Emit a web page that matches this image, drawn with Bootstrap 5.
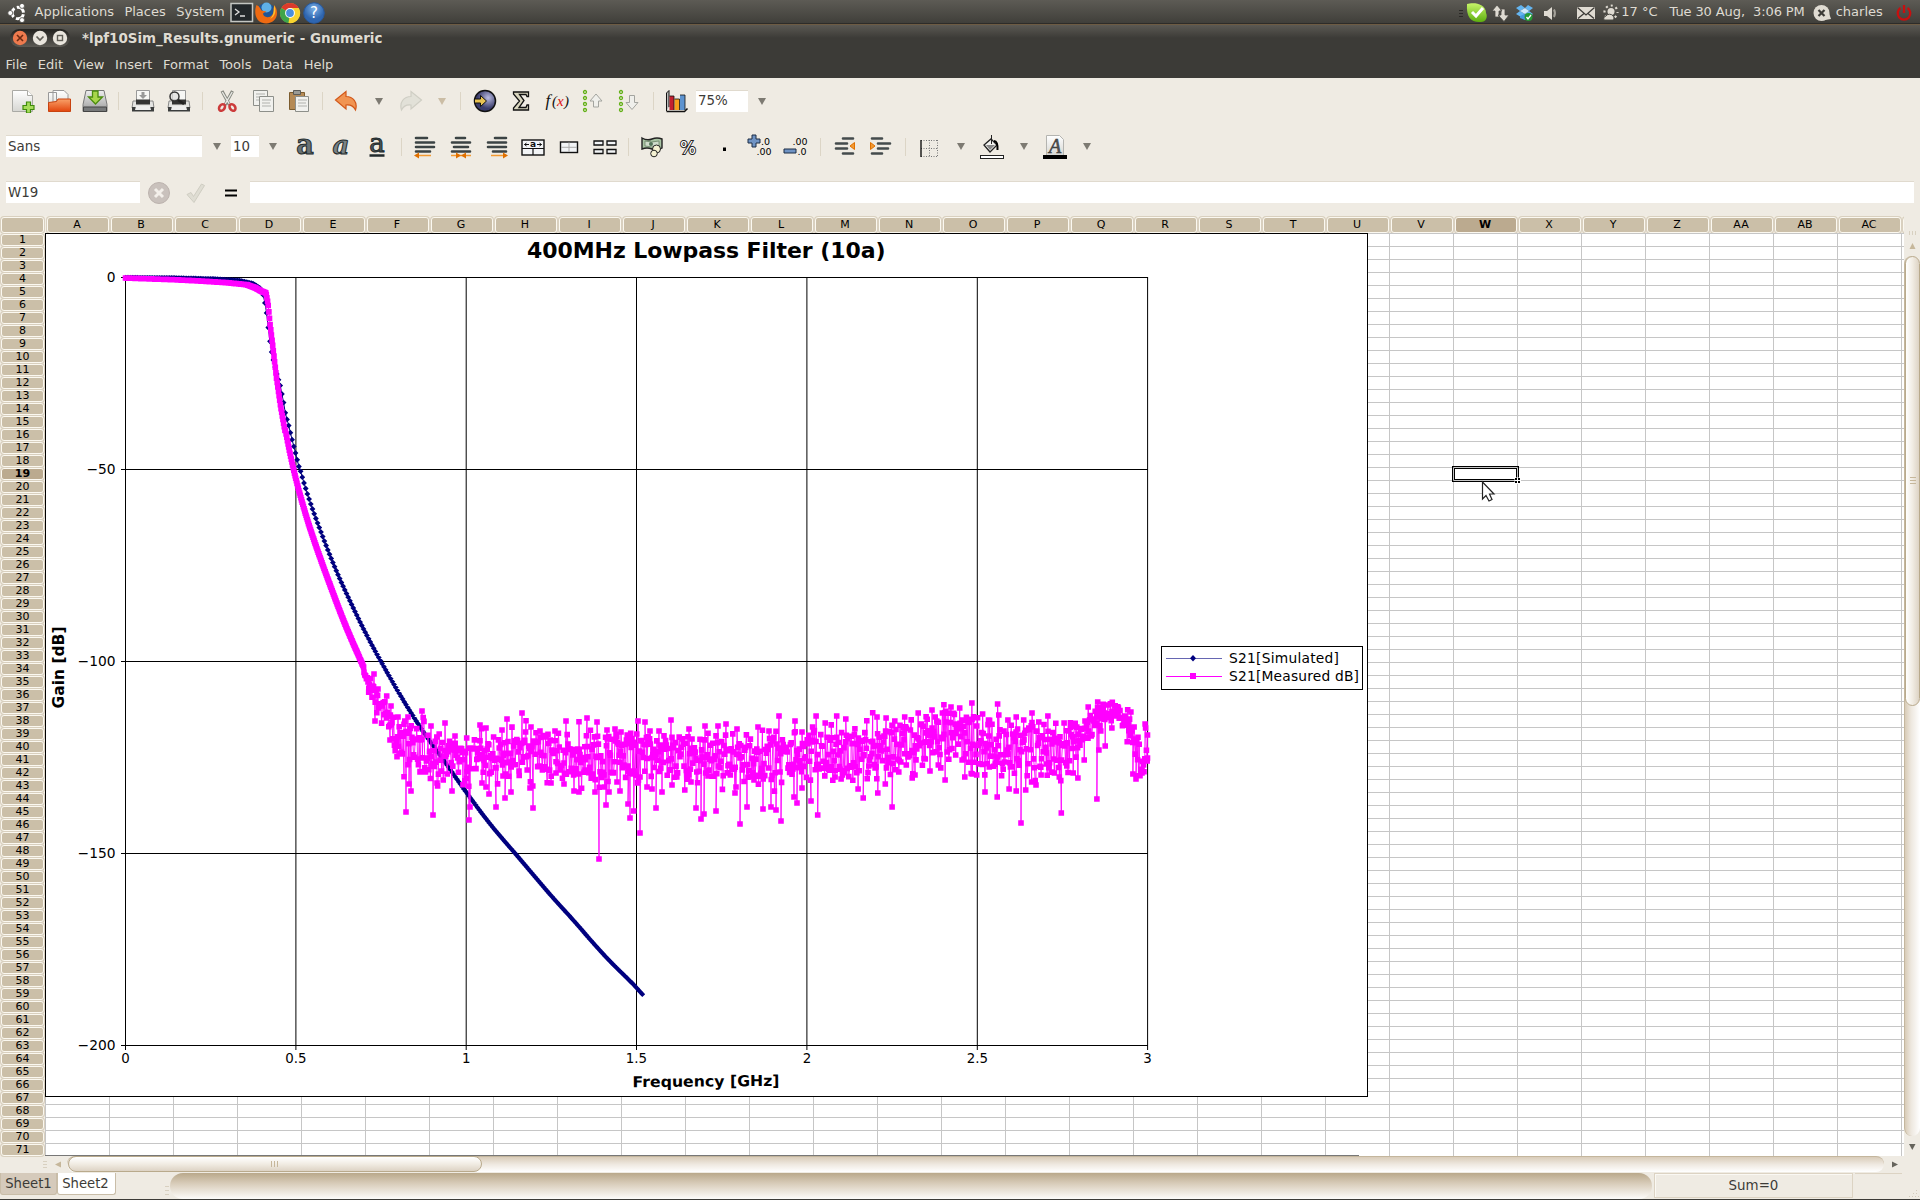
<!DOCTYPE html>
<html lang="en">
<head>
<meta charset="utf-8">
<title>lpf10Sim_Results.gnumeric - Gnumeric</title>
<link href="https://cdn.jsdelivr.net/npm/bootstrap@5.3.0/dist/css/bootstrap.min.css" rel="stylesheet">
<style>
body{font-family:"DejaVu Sans",sans-serif;font-size:13px;line-height:1;width:1920px;height:1200px;overflow:hidden;background:#efebe3;color:#3c3b37}
svg{display:block;flex:none}
.panelbar{height:25px;background:linear-gradient(#5d5b55,#403f3a 92%,#2d2c29 93%,#2d2c29 96%,#6d5b43 97%);color:#dfdbd2;white-space:pre}
.titlebar{height:26px;background:linear-gradient(#5b5953,#3c3b37 50%);color:#dfdbd2;font-weight:bold;padding-left:10px}
.wbtns{width:60px;height:18px;border-radius:9px;background:linear-gradient(#23221f,#5c5a54)}
.wtitle{margin-left:12px;padding-top:1px;font-size:13.45px;white-space:pre}
.menubar{height:27px;background:#3c3b37;color:#dfdbd2;padding-left:5.5px;padding-bottom:1px;gap:10.6px}
.pm{position:relative;top:-1px}
.tb1{height:46px;padding-left:4.5px}
.tb2{height:44px;padding-left:6px;padding-top:1px}
.tb3{height:48px;padding-left:6px;padding-top:1px}
.slot{width:36px;flex:none;display:flex;justify-content:center}
.entrybox{height:21px;background:#fff;flex:none;padding-left:2px;line-height:21.5px;font-size:13.4px;box-shadow:0 -1px 0 #e0dace}
.vsep{flex:none;height:18px;display:flex;justify-content:center}
.vsep:before{content:"";width:1px;background:#dcd5c6}
.drop{flex:none;display:flex;justify-content:center}
.drop:before{content:"";border:4px solid transparent;border-top:7px solid #7d7a72;border-bottom:0}
.drop.dim:before{border-top-color:#cbbda5}
.colhead{height:17px;overflow:hidden;background:#f3efe6;font-size:11px;color:#000}
.hcell{flex:none;background:#cbbfa8;border:1px solid #fbf8f0;box-shadow:0 0 0 1px #d9d0bf;border-radius:3px;text-align:center}
.colhead .hcell{width:62px;margin:1px 1px 0;height:16px;line-height:13px;padding-right:2px}
.colhead .corner{width:43px;margin-right:2px}
.hcell.cur{background:#bbaa8f;font-weight:bold}
.rowhead{width:45px;background:#f3efe6;font-size:11px;color:#000}
.rowhead .hcell{width:43px;height:12px;margin:1px 1px 0;line-height:10px}
.sheetarea{width:1859px;height:923px;background-color:#fff;background-image:linear-gradient(90deg,#c6c6c6 1px,transparent 1px),linear-gradient(#c6c6c6 1px,transparent 1px);background-size:64px 100%,100% 13px;overflow:hidden}
.plotsvg{position:absolute;left:0;top:0}
.vbar{width:16px}
.vtrough{height:880px;border-radius:8px;background:linear-gradient(90deg,#d8cbb7,#ede7de 40%,#fff);border-left:1px solid #c4b69d}
.vthumb{height:450px;border:1px solid #b9aa8c;border-radius:8px;background:linear-gradient(90deg,#fff,#f1ece3 50%,#ddd3c4)}
.hbar{height:16px}
.htrough{width:1817px;border-radius:8px;background:linear-gradient(#d9ccb9,#efe9e1 50%,#fff);border-top:1px solid #c4b69d}
.hthumb{width:414px;height:16px;margin-top:-1px;margin-left:1px;border:1px solid #b9aa8c;border-radius:8px;background:linear-gradient(#fff,#f1ece3 50%,#ddd3c4)}
.statusrow{height:26px;margin-top:1px}
.tabx{height:22px;line-height:22.5px;border:1px solid #c9bda8;border-top:0;border-radius:0 0 3px 3px;text-align:center;font-size:13.2px}
.progressx{width:1482px;height:26px;border-radius:13px;background:linear-gradient(#b9a88b,#d8ccb9 40%,#fdfcfa)}
.sumbox{width:199px;height:25px;border:1px solid #dcd3c3;box-shadow:inset 1px 1px 0 #faf8f3;text-align:center;line-height:23.5px;font-size:13.4px}
.floor{height:1px;background:#3c3b37}
</style>
</head>
<body>
<svg width="0" height="0" class="position-absolute">
 <defs>
  <linearGradient id="gp" x1="0" y1="0" x2="0" y2="1"><stop offset="0" stop-color="#fff"/><stop offset="1" stop-color="#d6d6d2"/></linearGradient>
  <linearGradient id="go" x1="0" y1="0" x2="0" y2="1"><stop offset="0" stop-color="#f9a26a"/><stop offset="1" stop-color="#e2450d"/></linearGradient>
  <linearGradient id="gs" x1="0" y1="0" x2="0" y2="1"><stop offset="0" stop-color="#eee"/><stop offset="1" stop-color="#9b9b9b"/></linearGradient>
  <radialGradient id="gb" cx=".65" cy=".35"><stop offset="0" stop-color="#b9bbe0"/><stop offset="1" stop-color="#3b3d6c"/></radialGradient>
  <radialGradient id="gh" cx=".5" cy=".3"><stop offset="0" stop-color="#7ab0e6"/><stop offset="1" stop-color="#2f66b0"/></radialGradient>
  <linearGradient id="gk" x1="0" y1="0" x2="0" y2="1"><stop offset="0" stop-color="#c8f56a"/><stop offset="1" stop-color="#5cae0d"/></linearGradient>
 </defs>
</svg>

<header class="panelbar d-flex align-items-center">
 <svg width="26" height="24" style="margin-left:4px" viewBox="4 0 26 24"><circle cx="17.800" cy="12" r="5.700" fill="none" stroke="#fff" stroke-width="3" stroke-dasharray="9.440 2.500" stroke-dashoffset="-1.250"/><g fill="#fff" stroke="#4b4a45" stroke-width=".8"><circle cx="10.300" cy="12" r="2.500"/><circle cx="22" cy="4.900" r="2.500"/><circle cx="22" cy="19.100" r="2.500"/></g></svg>
 <span class="pm" style="margin-left:4.500px">Applications</span><span class="pm" style="margin-left:10.500px">Places</span><span class="pm" style="margin-left:10.500px">System</span>
 <svg width="24" height="24" style="margin-left:5.500px"><rect x="1" y="2.500" width="21.500" height="18" fill="#22272a" stroke="#c4c6c2" stroke-width="1.500"/><path d="M5 8l4 3-4 3M10 15h5" stroke="#ddd" fill="none" stroke-width="1.300"/></svg>
 <svg width="24" height="24"><circle cx="12" cy="11.500" r="9.500" fill="#1f5596"/><circle cx="12.500" cy="6.500" r="5" fill="#5fb0e6"/><path d="M2.500 4C0 10 1 19 7.500 21.500c8 3 15.500-2 15.500-9.500 0-3-1-6-2.500-7.500l-1 3c1 6-3 9.500-7 8.500-3-.7-4-3-3-4l3-1.500-5-1L5 5.500z" fill="#ee6a12"/><path d="M20 4c3 5 1 12-4 14 4-4 4-9 4-14z" fill="#fdc02c"/></svg>
 <svg width="24" height="24" viewBox="0 0 24 24"><circle cx="12" cy="12" r="10" fill="#f7cf2c"/><path d="M12 12L3.300 7A10 10 0 0 1 20.700 7z" fill="#dc3a2c"/><path d="M12 12L3.300 7A10 10 0 0 0 10.500 22l4-7z" fill="#3fa54a"/><path d="M12 12V7h8.700A10 10 0 0 1 10.500 22z" fill="#f9d42f"/><circle cx="12" cy="12" r="4.900" fill="#fff"/><circle cx="12" cy="12" r="3.900" fill="#4a8fdd"/></svg>
 <svg width="24" height="24"><circle cx="12" cy="12" r="10.300" fill="url(#gh)" stroke="#28599e"/><text x="12" y="17" font-size="15" fill="#fff" text-anchor="middle">?</text></svg>
 <svg width="8" height="24" style="margin-left:1133px"><path d="M0 9.500h4M0 12.500h4M0 15.500h4" stroke="#2b2a27"/></svg>
 <svg width="24" height="24" style="margin-left:-1px"><path d="M1 3c6-2 19-1 19 9 2 4 0 9-5 9C6 22 0 17 1 3z" fill="url(#gk)"/><path d="M6 11l4 4 7-8" fill="none" stroke="#fff" stroke-width="3"/></svg>
 <svg width="20" height="24"><path d="M2 10l5-6 5 6H9v6H5v-6zM8 14h3V8h4v6h4l-5 6.500z" fill="#dfdbd2" stroke="#4b4a45" stroke-width=".8"/></svg>
 <svg width="20" height="24" style="margin-left:5px"><path d="M6 4l4 3-5 3-4-3zM13 4l5 3-4 3-4-3zM5 10l5 3-4 3-5-3zM14 10l4 3-4 3-4-3z" fill="#64b5f0"/><path d="M10 7l4 3-4 3-5-3z" fill="#cfe9fb"/><path d="M5 15l5-2 4 2v2l-4 2-5-2z" fill="#4598dd"/><circle cx="13.500" cy="16" r="4" fill="#259b35"/><path d="M11.500 16l1.500 2 3-4" stroke="#fff" fill="none" stroke-width="1.300"/></svg>
 <svg width="22" height="24" style="margin-left:6px"><path d="M3 10h3l5-4v13l-5-4H3z" fill="#dfdbd2"/><path d="M13 8.500q2 4 0 7.500" stroke="#a5a29a" fill="none" stroke-width="2"/></svg>
 <svg width="20" height="24" style="margin-left:13px"><rect x="1" y="6" width="18" height="12" fill="#dfdbd2"/><path d="M1.500 6.500L10 14l8.500-7.500M2 17.500l6-5M18 17.500l-6-5" fill="none" stroke="#3c3b37" stroke-width="1.300"/></svg>
 <svg width="18" height="24" style="margin-left:6px"><circle cx="9" cy="11" r="6.500" fill="none" stroke="#dfdbd2" stroke-width="2.200" stroke-dasharray="2 3.100" stroke-dashoffset="1"/><circle cx="9" cy="10.500" r="3.500" fill="#dfdbd2"/><path d="M2 19a3 3 0 0 1 2-4 4 3.500 0 0 1 7 0 2.500 2.500 0 0 1 0 4z" fill="#dfdbd2" stroke="#4b4a45"/></svg>
 <span class="pm" style="margin-left:1px">17 °C</span><span class="pm" style="margin-left:12px;letter-spacing:-.1px">Tue 30 Aug,  3:06 PM</span>
 <svg width="20" height="24" style="margin-left:8.500px"><circle cx="8.500" cy="12" r="8" fill="#dfdbd2"/><path d="M9 19.500l9-1.500-2-6z" fill="#dfdbd2"/><path d="M5.500 9l6 6M11.500 9l-6 6" stroke="#3c3b37" stroke-width="2.200"/></svg>
 <span class="pm" style="margin-left:2.500px">charles</span>
 <svg width="18" height="24" class="ms-auto" style="margin-right:7px"><path d="M5.500 7A6.300 6.300 0 1 0 12.500 7" fill="none" stroke="#c80f0f" stroke-width="2.300"/><path d="M9 4v8" stroke="#c80f0f" stroke-width="2.300"/></svg>
</header>

<div class="titlebar d-flex align-items-center">
 <div class="wbtns"><svg width="60" height="18"><circle cx="10" cy="9" r="7.200" fill="#ee7a4e"/><path d="M7 6l6 6M13 6l-6 6" stroke="#6b2a12" stroke-width="1.600"/><circle cx="30" cy="9" r="7.200" fill="#e9e5dd"/><path d="M26.500 7.500l3.500 3.500 3.500-3.500" stroke="#605e57" fill="none" stroke-width="1.700"/><circle cx="50" cy="9" r="7.200" fill="#e9e5dd"/><rect x="47.500" y="6.500" width="5" height="5" stroke="#605e57" fill="none" stroke-width="1.400"/></svg></div>
 <span class="wtitle">*lpf10Sim_Results.gnumeric - Gnumeric</span>
</div>
<nav class="menubar d-flex align-items-center"><span>File</span><span>Edit</span><span>View</span><span>Insert</span><span>Format</span><span>Tools</span><span>Data</span><span>Help</span></nav>

<div class="tb1 d-flex align-items-center">
 <div class="slot"><svg width="24" height="24"><path d="M1.500 1.500h15l5 5v16h-20z" fill="url(#gp)" stroke="#aaaaa5"/><path d="M16.500 1.500v5h5" fill="#fff" stroke="#aaaaa5"/><path d="M15.500 13h4v3.500h3.500v4h-3.500V24h-4v-3.500H12v-4h3.500z" fill="#a6dc5a" stroke="#3f8a0c" stroke-width="1.200"/></svg></div>
 <div class="slot"><svg width="26" height="24"><path d="M2.500 3.500h8v18h-8zM7 1.500h11l4 4v14H7z" fill="url(#gp)" stroke="#999"/><path d="M2.500 22.500v-9l8-1 1.500-2.500h12.500v12.500z" fill="url(#go)" stroke="#c8420f"/></svg></div>
 <div class="slot"><svg width="26" height="24"><path d="M4 1.500h18l3 14v7H1v-7z" fill="url(#gs)" stroke="#777"/><path d="M1.500 18h23v4.500h-23z" fill="#77797a" stroke="#444"/><path d="M10.500 2h5.500v6h4.500L13.500 15 6.500 8h4z" fill="#a8d64a" stroke="#4c8c10" stroke-width="1.300"/></svg></div>
 <div class="vsep" style="width:12px"></div>
 <div class="slot"><svg width="24" height="24"><path d="M5.500 1.500h13v12h-13z" fill="#f7f7f5" stroke="#999"/><path d="M10.500 3h3v3h2.500l-4 4-4-4h2.500z" fill="#999"/><path d="M2 12h20l1 7H1z" fill="#e4e4e2" stroke="#888"/><path d="M5 10.500h14v5H5z" fill="#333"/><path d="M1 18h22v4.500H1z" fill="#3b3d3d"/><path d="M5 17h14l1 4H4z" fill="#eee"/></svg></div>
 <div class="slot"><svg width="24" height="24"><path d="M5.500 1.500h13v12h-13z" fill="#f7f7f5" stroke="#999"/><path d="M2 12h20l1 7H1z" fill="#e4e4e2" stroke="#888"/><path d="M5 10.500h14v5H5z" fill="#333"/><path d="M1 18h22v4.500H1z" fill="#3b3d3d"/><path d="M5 17h14l1 4H4z" fill="#eee"/><circle cx="7.500" cy="7.500" r="4.500" fill="#ddd" fill-opacity=".7" stroke="#333" stroke-width="1.500"/><path d="M11 11l6 4" stroke="#222" stroke-width="2.500"/></svg></div>
 <div class="vsep" style="width:12px"></div>
 <div class="slot"><svg width="24" height="24"><path d="M7 2l7.500 14M17.500 2L10 16" stroke="#85877f" stroke-width="3.200"/><path d="M7.300 3l7 12M17.200 3l-7 12" stroke="#e8e8e4" stroke-width="1.400"/><ellipse cx="7" cy="18.500" rx="2.600" ry="3.600" transform="rotate(35 7 18.500)" fill="none" stroke="#cc3b3b" stroke-width="2.600"/><ellipse cx="17.500" cy="18.500" rx="2.600" ry="3.600" transform="rotate(-35 17.500 18.500)" fill="none" stroke="#cc3b3b" stroke-width="2.600"/></svg></div>
 <div class="slot"><svg width="24" height="24"><g fill="#f1f1ee" stroke="#8d8f8a"><path d="M2.500 1.500h14v15h-14z"/><path d="M8.500 7.500h14v15h-14z"/></g><path d="M5 5h9M5 8h3M5 11h3M11 11h9M11 14h8M11 17h9" stroke="#b0b1ad"/></svg></div>
 <div class="slot"><svg width="24" height="24"><path d="M2.500 3.500h15v17h-15z" fill="#b58a55" stroke="#7c5c2e"/><path d="M6.500 1.500h7v4h-7z" fill="#9b9b95" stroke="#5c5c58"/><path d="M8.500 7.500h13v15h-13z" fill="#f1f1ee" stroke="#8d8f8a"/><path d="M11 11h9M11 14h8M11 17h9" stroke="#b0b1ad"/></svg></div>
 <div class="vsep" style="width:11.500px"></div>
 <div class="slot"><svg width="24" height="24"><path d="M1.500 11L12 2.500v5c7 0 12 6 9.500 13.500-2-4-5-5.500-9.500-5v4z" fill="#f19452" stroke="#d2581a" stroke-width="1.200"/></svg></div>
 <div class="drop" style="width:29px"></div>
 <div class="slot"><svg width="24" height="24"><path d="M22.500 11L12 2.500v5c-7 0-12 6-9.500 13.500 2-4 5-5.500 9.500-5v4z" fill="#e2e1d8" stroke="#cfcec4" stroke-width="1.200"/></svg></div>
 <div class="drop dim" style="width:25px"></div>
 <div class="vsep" style="width:13px"></div>
 <div class="slot"><svg width="24" height="24"><circle cx="12" cy="12" r="10.500" fill="url(#gb)" stroke="#111" stroke-width="1.500"/><path d="M1.500 10h6v-3.500l6 5.500-6 5.500v-3.500h-6z" fill="#e8c353" stroke="#111" stroke-width="1"/></svg></div>
 <div class="slot"><svg width="22" height="24"><path d="M3.500 3h15v4.500h-1.500L16 5.500H9.500L14 11.500l-5 7h7l1-2.500h1.500V21h-15v-2l6-7-6-7z" fill="#d9d6bf" stroke="#111" stroke-width="1.300"/></svg></div>
 <div class="slot"><svg width="28" height="24"><text x="2.500" y="17" font-size="17" font-family="Liberation Serif,serif" font-style="italic" fill="#111">f</text><text x="9" y="17" font-size="15" font-family="Liberation Serif,serif" font-style="italic" fill="#111">(</text><text x="14" y="17" font-size="15" font-family="Liberation Serif,serif" font-style="italic" fill="#d11">x</text><text x="21" y="17" font-size="15" font-family="Liberation Serif,serif" font-style="italic" fill="#111">)</text></svg></div>
 <div class="slot"><svg width="24" height="24"><g fill="none" stroke="#62b016" stroke-width="1.300"><circle cx="4" cy="3" r="1.500"/><circle cx="4" cy="9" r="1.500"/><circle cx="4" cy="15" r="1.500"/><circle cx="4" cy="21" r="1.500"/></g><path d="M15 5l6 7h-3.500v6h-5v-6H9z" fill="#efefeb" stroke="#a3a49f"/></svg></div>
 <div class="slot"><svg width="24" height="24"><g fill="none" stroke="#62b016" stroke-width="1.300"><circle cx="4" cy="3" r="1.500"/><circle cx="4" cy="9" r="1.500"/><circle cx="4" cy="15" r="1.500"/><circle cx="4" cy="21" r="1.500"/></g><path d="M15 20.500l6-7h-3.500v-7h-5v7H9z" fill="#efefeb" stroke="#a3a49f"/></svg></div>
 <div class="vsep" style="width:12px"></div>
 <div class="slot"><svg width="24" height="24"><path d="M1.500 22V4l2.500-2.500V18" fill="#bbb" stroke="#111"/><path d="M1.500 22.500h18l3-3" fill="none" stroke="#111" stroke-width="1.500"/><path d="M4.500 7h4.500v14h-4.500z" fill="#c4202f"/><path d="M9.500 10h5v11h-5z" fill="#f8a01c"/><path d="M15 6h5v15h-5z" fill="#5d93cf"/><path d="M4.500 7h4.500v14M9.500 10h5v11M15 6h5v15" fill="none" stroke="#111" stroke-width=".8"/></svg></div>
 <div class="entrybox" style="width:52px;margin-left:1px;line-height:20px">75%</div>
 <div class="drop" style="width:28px"></div>
</div>

<div class="tb2 d-flex align-items-center">
 <div class="entrybox" style="width:196px">Sans</div><div class="drop" style="width:29px"></div>
 <div class="entrybox" style="width:28px">10</div><div class="drop" style="width:28px"></div>
 <div class="slot"><svg width="30" height="40" viewBox="-3 -8 30 40"><text x="12" y="19" font-family="DejaVu Serif,serif" font-weight="bold" font-size="27" text-anchor="middle" fill="#6a7274" stroke="#222a2c" stroke-width="1">a</text></svg></div>
 <div class="slot"><svg width="30" height="40" viewBox="-3 -8 30 40"><text x="12" y="19" font-family="DejaVu Serif,serif" font-style="italic" font-weight="bold" font-size="26" text-anchor="middle" fill="#7b8385" stroke="#222a2c" stroke-width="1">a</text></svg></div>
 <div class="slot"><svg width="30" height="40" viewBox="-3 -8 30 40"><text x="12" y="17" font-family="DejaVu Serif,serif" font-size="26" text-anchor="middle" fill="#50585a" stroke="#222a2c" stroke-width="1">a</text><path d="M4.500 20.500h15" stroke="#222a2c" stroke-width="2.500"/></svg></div>
 <div class="vsep" style="width:12px"></div>
 <div class="slot"><svg width="24" height="24"><path d="M3 3h11M3 7.500h18M3 12h18M3 16.500h14" stroke="#3b4344" stroke-width="2.600" stroke-linecap="round"/><path d="M4 20.500h14" stroke="#f39a32" stroke-width="1.500"/><path d="M1 20.500l5-3v6z" fill="#e07000"/></svg></div>
 <div class="slot"><svg width="24" height="24"><path d="M7 3h9M3 7.500h18M5 12h14M3 16.500h18" stroke="#3b4344" stroke-width="2.600" stroke-linecap="round"/><path d="M2 20.500h20" stroke="#f39a32" stroke-width="1.500"/><path d="M12 20.500l-5-3v6zM12 20.500l5-3v6z" fill="#e07000"/></svg></div>
 <div class="slot"><svg width="24" height="24"><path d="M10 3h11M3 7.500h18M3 12h18M8 16.500h13" stroke="#3b4344" stroke-width="2.600" stroke-linecap="round"/><path d="M6 20.500h14" stroke="#f39a32" stroke-width="1.500"/><path d="M23 20.500l-5-3v6z" fill="#e07000"/></svg></div>
 <div class="slot"><svg width="24" height="24"><rect x="1" y="5" width="22" height="15" fill="#f2f4f6" stroke="#111" stroke-width="1.400"/><path d="M1 13.500h22M12 13.500v6.500" stroke="#111" stroke-width="1.200"/><path d="M3.500 9.500h4.500M16 9.500h4.500M3.500 9.500l2-1.500M3.500 9.500l2 1.500M20.500 9.500l-2-1.500M20.500 9.500l-2 1.500" stroke="#111" fill="none"/><text x="12" y="12" font-size="9" font-weight="bold" text-anchor="middle" fill="#111">a</text></svg></div>
 <div class="slot"><svg width="24" height="24"><rect x="3.500" y="7" width="17" height="10.500" fill="#f2f4f6" stroke="#111" stroke-width="1.400"/><path d="M4 12.300h16M12 7.500v9.500" stroke="#aaa"/></svg></div>
 <div class="slot"><svg width="24" height="24"><g fill="#f2f4f6" stroke="#111" stroke-width="1.300"><path d="M1 6h9v4H1zM14 6h9v4h-9zM1 14.500h9v4H1zM14 14.500h9v4h-9z"/></g></svg></div>
 <div class="vsep" style="width:11px"></div>
 <div class="slot"><svg width="24" height="24"><path d="M2 3q5 3 10 1t10 0v9q-5 3-10 1t-10 0z" fill="#a9c4a4" stroke="#222" stroke-width="1.400"/><path d="M5 6q6 2 14 0v5q-6 2-14 0z" fill="#cfdccb" stroke="#5f7a5b" stroke-width=".7"/><circle cx="11" cy="9" r="2" fill="#55755a"/><circle cx="16.500" cy="14" r="4" fill="#f5f2d2" stroke="#222"/><circle cx="14" cy="18.500" r="3.300" fill="#f5f2d2" stroke="#222"/></svg></div>
 <div class="slot"><svg width="24" height="24"><text x="12" y="19" font-size="18" text-anchor="middle" fill="#fff" stroke="#222" stroke-width="2" paint-order="stroke" textLength="16" lengthAdjust="spacingAndGlyphs">%</text></svg></div>
 <div class="slot"><svg width="24" height="24"><rect x="11" y="12.500" width="3" height="3.500" fill="#000"/></svg></div>
 <div class="slot"><svg width="26" height="26"><path d="M5 1h4v4h4v4H9v4H5V9H1V5h4z" fill="#6f93c4" stroke="#1c2c44"/><text x="14" y="11" font-size="9.500" fill="#000">.0</text><text x="9.500" y="21" font-size="9.500" fill="#000">.00</text></svg></div>
 <div class="slot"><svg width="26" height="26"><path d="M1 15h12v4H1z" fill="#6f93c4" stroke="#1c2c44"/><text x="9.500" y="11" font-size="9.500" fill="#000">.00</text><text x="14.500" y="21" font-size="9.500" fill="#000">.0</text></svg></div>
 <div class="vsep" style="width:13px"></div>
 <div class="slot"><svg width="24" height="24"><path d="M10 3.500h10M3 8.500h11M3 13.500h11M10 18.500h10" stroke="#444b4c" stroke-width="2.600" stroke-linecap="round"/><path d="M21.500 7.500v7l-4.500-3.500z" fill="#f39a32" stroke="#e07000"/></svg></div>
 <div class="slot"><svg width="24" height="24"><path d="M3 3.500h10M9 8.500h12M9 13.500h10M3 18.500h10" stroke="#444b4c" stroke-width="2.600" stroke-linecap="round"/><path d="M1.500 7.500v7l4.500-3.500z" fill="#f39a32" stroke="#e07000"/></svg></div>
 <div class="vsep" style="width:12px"></div>
 <div class="slot"><svg width="24" height="24"><path d="M4 5.500h17M4 13.500h17M4 21.500h17M12.500 5v17M20.500 5v17" stroke="#777" stroke-dasharray="1 1.500" fill="none"/><path d="M4 5v17" stroke="#000" stroke-width="1.300"/></svg></div><div class="drop" style="width:27px"></div>
 <div class="slot"><svg width="26" height="26"><path d="M5 11l7-6 6 6-7 7z" fill="#f3f3f0" stroke="#222" stroke-width="1.300"/><path d="M7 11h9l-5 5z" fill="#888"/><path d="M12.500 1v9" stroke="#222"/><path d="M15 7q4 0 3.500 9" fill="none" stroke="#000" stroke-width="2"/><rect x="1.500" y="21.500" width="23" height="3" fill="#fff" stroke="#222"/></svg></div><div class="drop" style="width:27px"></div>
 <div class="slot"><svg width="26" height="26"><path d="M4.500 1.500h13l4 4v16h-17z" fill="url(#gp)" stroke="#b4b4b0"/><text x="13" y="19" font-family="Liberation Serif,serif" font-style="italic" font-size="20" text-anchor="middle" fill="#555" stroke="#333" stroke-width=".5">A</text><rect x="1" y="21" width="24" height="4" fill="#000"/></svg></div><div class="drop" style="width:27px"></div>
</div>

<div class="tb3 d-flex align-items-center">
 <div class="entrybox" style="width:134px">W19</div>
 <div class="slot" style="width:38px"><svg width="24" height="24"><circle cx="12" cy="12" r="10.500" fill="#c9c1bc" stroke="#bcb3ae"/><path d="M8 8l8 8M16 8l-8 8" stroke="#f3efea" stroke-width="3"/></svg></div>
 <div class="slot"><svg width="24" height="24"><path d="M3 13.500l4-2 2.500 4L17.500 3l3 1.500L10 21.500z" fill="#dfddd3" stroke="#cfcdc2"/></svg></div>
 <div class="slot" style="width:34px"><svg width="16" height="24"><path d="M2 9.500h12M2 14.500h12" stroke="#000" stroke-width="2.200"/></svg></div>
 <div class="entrybox" style="width:1664px;margin-left:2px"></div>
</div>

<main class="d-flex">
 <div>
  <div class="colhead d-flex" id="cols"></div>
  <div class="d-flex">
   <div class="rowhead" id="rows"></div>
   <div class="sheetarea position-relative">
    <svg class="plotsvg" width="1859" height="923" viewBox="45 233 1859 923" id="plot"></svg>
   </div>
  </div>
 </div>
 <div class="vbar">
  <svg width="16" height="40"><path d="M5.500 15v4M8.500 15v4M11.500 15v4" stroke="#d8d0c0"/><path d="M5.500 33h6l-3-6z" fill="#c6b79b"/></svg>
  <div class="vtrough"><div class="vthumb d-flex align-items-center justify-content-center"><svg width="6" height="8"><path d="M0 .5h6M0 3.500h6M0 6.500h6" stroke="#c6b79b"/></svg></div></div>
  <svg width="16" height="20"><path d="M5 8h6.500l-3.200 6z" fill="#66645c"/></svg>
 </div>
</main>
<div class="hbar d-flex">
 <svg width="67" height="16"><path d="M43 5.500h4M43 8.500h4M43 11.500h4" stroke="#d8d0c0"/><path d="M55 8.500l6-3v6z" fill="#c6b79b"/></svg>
 <div class="htrough"><div class="hthumb d-flex align-items-center justify-content-center"><svg width="8" height="6"><path d="M.5 0v6M3.500 0v6M6.500 0v6" stroke="#c6b79b"/></svg></div></div>
 <svg width="36" height="16"><path d="M8 5.500v6l6-3z" fill="#66645c"/></svg>
</div>
<footer class="statusrow d-flex">
 <div class="tabx" style="width:57px;background:#d5cabb">Sheet1</div>
 <div class="tabx" style="width:59px;padding-right:2px;background:#fff">Sheet2</div>
 <svg width="54" height="26"><path d="M49 13.500h4M49 17.500h4M49 21.500h4" stroke="#d8d0c0"/></svg>
 <div class="progressx"></div>
 <div class="sumbox" style="margin-left:2px">Sum=0</div>
 <svg width="67" height="26"><path d="M2 .5h47" stroke="#dcd3c3"/><path d="M56 23.500h10M60 20.500h6M63 17.500h3" stroke="#d3cabb" stroke-dasharray="1 2"/></svg>
</footer>
<div class="floor"></div>

<script src="https://cdn.jsdelivr.net/npm/bootstrap@5.3.0/dist/js/bootstrap.bundle.min.js"></script>
<script>
const letters = 'ABCDEFGHIJKLMNOPQRSTUVWXYZ'.split('').concat(['AA','AB','AC','']);
document.getElementById('cols').innerHTML = '<div class="hcell corner"></div>' +
  letters.map(l => `<div class="hcell${l==='W'?' cur':''}">${l}</div>`).join('');
document.getElementById('cols').style.width = '1904px';
let rowsHtml = '';
for (let i = 1; i <= 71; i++) rowsHtml += `<div class="hcell${i===19?' cur':''}">${i}</div>`;
document.getElementById('rows').innerHTML = rowsHtml;

// piecewise-linear interpolation through [x, y] knots
function lerp(k, x) {
  if (x <= k[0][0]) return k[0][1];
  for (let i = 1; i < k.length; i++) if (x <= k[i][0]) {
    const a = k[i-1], b = k[i];
    return a[1] + (b[1]-a[1]) * (x-a[0]) / (b[0]-a[0]);
  }
  return k[k.length-1][1];
}
// same, averaged over a window to round the corners at the knots
function smooth(k, x, w) {
  let t = 0;
  for (let i = -4; i <= 4; i++) t += lerp(k, x + i * w / 4);
  return t / 9;
}
const pairs = (s, ox, oy, sx) => s.trim().split(/\s+/).map(p => { const q = p.split(',').map(Number); return [ox+q[0]/sx, oy+q[1]/3]; });
const A = s => pairs(s, 40, 220, 3), B = s => pairs(s, 340, 640, 3), C = s => pairs(s, 760, 640, 2.529);

// simulated response
const sim = A('257,173 400,174 520,177 600,182 640,191 660,204 669,222 675,250 680,280 684,315 688,348 692,380 698,411 705,440 712,468 720,494 730,543 737,585 744,608 754,650 768,705 775,733 786,775 797,806 803,830 820,875 842,935 858,975 885,1047 910,1100 940,1165 975,1237 1020,1320')
  .concat(B('120,60 180,165 217,225 250,277 285,325 310,358 340,403 378,456 440,540 490,600 530,645 580,705 640,775 700,840 760,910 820,975 870,1022 910,1066'));
let simPts = [];
for (let x = 125.5; x <= 643.5; x += 1.7) simPts.push([x, x < 300 ? lerp(sim, x) : x > 632 ? lerp(sim, x) : smooth(sim, x, 9)]);

// measured response: smooth roll-off, then the analyser's noise floor
const roll = A('257,174 310,176 400,179 480,183 560,188 620,194 645,203 665,214 678,219 684,250 690,310 701,400 709,470 722,560 738,650 750,710 762,755 780,830 803,905 835,1000 872,1100 915,1215 940,1272 960,1315 975,1350 1000,1410');
const lows = B('86,157 105,243 150,300 171,350 192,410 198,516 207,432 213,453 240,396 279,525 291,429 336,453 369,434 387,540 390,501 426,429 438,441 447,462 468,501 489,408 495,474 513,456 537,393 570,444 579,504 633,429 648,399 672,432 702,453 717,456 735,390 765,456 777,657 798,495 807,456 831,426 840,453 864,492 870,534 881,513 900,579 921,441 936,447 948,504 966,456 996,435 1041,405 1053,426 1068,504 1083,537 1092,522 1104,408 1128,513 1171,405 1185,459 1200,552 1221,501 1242,420 1269,507 1293,501 1308,510 1323,543 1362,471 1371,489 1386,444')
  .concat(C('129,483 146,525 180,380 190,411 205,417 230,378 248,447 261,474 291,384 298,459 317,432 334,501 351,396 370,375 385,414 392,405 418,357 430,393 451,375 468,420 495,345 511,360 518,411 537,402 548,405 569,456 580,381 600,471 630,447 648,453 660,549 672,450 687,426 698,435 711,405 724,372 757,411 762,519 776,378 792,399 804,414 820,360 852,477 857,330 873,318 890,264 943,402 951,417 966,399 970,375 980,354'));
const highs = B('102,102 114,147 140,168 153,198 174,231 204,231 246,213 273,258 315,249 345,288 380,294 420,255 438,264 486,270 501,237 546,219 558,242 573,261 600,273 645,273 678,243 717,245 741,234 771,246 801,270 825,267 843,276 872,280 894,243 915,246 930,273 957,273 993,240 1047,267 1095,258 1134,258 1158,252 1191,267 1254,261 1287,273 1317,228 1365,243 1386,276')
  .concat(C('133,261 142,228 165,249 194,228 217,237 240,266 270,242 285,218 296,231 319,234 341,243 366,231 400,219 420,230 435,210 465,194 483,201 505,204 536,189 563,222 578,240 601,192 604,225 627,240 648,231 667,240 688,219 705,246 728,228 748,250 769,249 785,248 822,243 830,201 854,186 868,193 880,195 891,187 905,200 930,209 938,216 946,261 956,292 974,252 980,285'));
const mid = [[364,670],[370,681],[376,701],[383,717],[393,726],[403,740],[425,747],[450,754],[600,753],[760,758],[850,752],[900,742],[950,735],[1000,743],[1060,747],[1075,735],[1087,727],[1095,717],[1115,707],[1125,714],[1133,737],[1140,757],[1147,744]];
const spread = [[364,.12],[374,.5],[400,.9],[430,1],[1060,1],[1085,.65],[1115,.4],[1130,.7],[1147,.9]];
let seed = 20110830;
const rnd = () => (seed = (seed * 1103515245 + 12345) % 2147483648) / 2147483648;
let meas = [];
for (let x = 125.5; x < 364; x += .64) meas.push([x, x < 285 ? lerp(roll, x) : smooth(roll, x, 9)]);
for (let x = 364; x < 1147.6; x += .8) {
  const s = lerp(spread, x);
  let d = -4.343 * Math.log(-Math.log(1 - rnd() * .999) + .02) * 3.84 * s;
  let y = lerp(mid, x) + d - 5 * s;
  y = Math.max(y, lerp(highs, x) + rnd() * 16);
  y = Math.min(y, lerp(mid, x) + (12 + rnd() * 24) * s);
  meas.push([x, y]);
}
meas = meas.concat(lows, highs).sort((a, b) => a[0] - b[0]);

const X = f => 125.5 + 340.7 * f;
let s = '<rect x="45.5" y="233.5" width="1322" height="863" fill="#fff" stroke="#000"/>';
s += '<path d="M45 1155.5H1359" stroke="#777"/>';
s += '<g stroke="#000" fill="none"><path d="';
for (let i = 0; i <= 4; i++) s += `M121 ${277.5+192*i}H1148`;
for (let i = 0; i <= 6; i++) s += `M${X(i/2).toFixed(1)} 277V1050`;
s += '"/></g>';
const f2 = v => v.toFixed(1);
s += `<path d="M${simPts.map(p => f2(p[0])+' '+f2(p[1])).join('L')}" fill="none" stroke="#00007f" stroke-width="1"/>`;
s += `<path d="${simPts.map(p => `M${f2(p[0]-2.9)} ${f2(p[1])}l2.9-2.9 2.9 2.9-2.9 2.9z`).join('')}" fill="#00007f"/>`;
s += `<path d="M${meas.map(p => f2(p[0])+' '+f2(p[1])).join('L')}" fill="none" stroke="#f0f" stroke-width=".9" stroke-linejoin="bevel"/>`;
s += `<path d="${meas.map(p => `M${f2(p[0]-2.8)} ${f2(p[1]-2.8)}h5.6v5.6h-5.6z`).join('')}" fill="#f0f"/>`;
s += '<g font-size="13.8" fill="#000">';
['0','−50','−100','−150','−200'].forEach((t, i) => s += `<text x="115.500" y="${282+192*i}" text-anchor="end">${t}</text>`);
['0','0.5','1','1.5','2','2.5','3'].forEach((t, i) => s += `<text x="${X(i/2).toFixed(1)}" y="1063" font-size="13.400" text-anchor="middle">${t}</text>`);
s += '<rect x="1161.5" y="646.5" width="201" height="43" fill="#fff" stroke="#000"/>';
s += '<path d="M1166 658.500h56" stroke="#00007f" stroke-opacity=".6"/><path d="M1190 658.200l3-3.200 3 3.200-3 3.200z" fill="#00007f"/>';
s += '<path d="M1166 676.500h56" stroke="#f0f"/><rect x="1190" y="673" width="6" height="6" fill="#f0f"/>';
s += '<text x="1229" y="663" textLength="110">S21[Simulated]</text><text x="1229" y="681" textLength="130">S21[Measured dB]</text></g>';
s += '<g font-weight="bold" fill="#000"><text x="527" y="258" font-size="22" textLength="358.500">400MHz Lowpass Filter (10a)</text>';
s += '<text x="632.500" y="1086.500" font-size="15" textLength="147" lengthAdjust="spacingAndGlyphs" transform="rotate(-.5 706 1082)">Frequency [GHz]</text>';
s += '<text transform="translate(64 708.500) rotate(-90)" font-size="15" textLength="82" lengthAdjust="spacingAndGlyphs">Gain [dB]</text></g>';
// cell cursor on W19 and the mouse pointer
s += '<path d="M1453.500 467.500h64v13h-64z" fill="none" stroke="#000" stroke-width="3"/><path d="M1453.500 467.500h64v13h-64z" fill="none" stroke="#c6c6c6"/>';
s += '<path d="M1514.500 477.500h6.500v6.500h-6.500z" fill="#fff"/><path d="M1515 478h2v2h-2zM1518 478h2v2h-2zM1515 481h2v2h-2zM1518 481h2v2h-2z" fill="#000"/>';
s += '<path d="M1482.500 482v17l3.500-3.500 3 5.500 3-1.500-2.500-5.500h4.500z" fill="#fff" stroke="#222" stroke-width="1.200"/>';
document.getElementById('plot').innerHTML = s;
</script>
</body>
</html>
